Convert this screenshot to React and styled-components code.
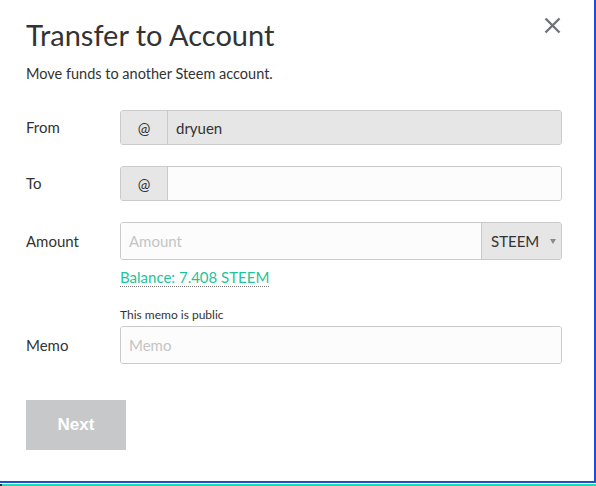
import styled, { createGlobalStyle } from "styled-components";

const GlobalStyle = createGlobalStyle`
  html, body {
    margin: 0;
    padding: 0;
    background: #fff;
  }
  body {
    font-family: "Source Sans Pro", Lato, "Liberation Sans", sans-serif;
    color: #333;
  }
`;

const fields = [
  { key: "from", label: "From", prefix: "@", value: "dryuen", disabled: true },
  { key: "to", label: "To", prefix: "@", value: "" },
];

const App = () => {
  return (
    <>
      <GlobalStyle />
      <Frame>
        <Modal>
          <CloseButton aria-label="Close">
            <svg width="17" height="17" viewBox="0 0 17 17">
              <path
                d="M1.5 1.5L15.5 15.5M15.5 1.5L1.5 15.5"
                stroke="#6e7479"
                strokeWidth="2.4"
              />
            </svg>
          </CloseButton>

          <Title>Transfer to Account</Title>
          <Subtitle>Move funds to another Steem account.</Subtitle>

          <Form>
            {fields.map((f) => (
              <Row key={f.key}>
                <Label>{f.label}</Label>
                <InputGroup>
                  <Addon>{f.prefix}</Addon>
                  <TextInput
                    type="text"
                    defaultValue={f.value}
                    disabled={f.disabled}
                    $disabled={f.disabled}
                  />
                </InputGroup>
              </Row>
            ))}

            <Row $tall>
              <Label $tall>Amount</Label>
              <div>
                <InputGroup $tall>
                  <TextInput type="text" placeholder="Amount" />
                  <Select>
                    STEEM
                    <Caret />
                  </Select>
                </InputGroup>
                <Balance>Balance: 7.408 STEEM</Balance>
              </div>
            </Row>

            <MemoRow>
              <Label $tall>Memo</Label>
              <div>
                <Hint>This memo is public</Hint>
                <InputGroup $tall>
                  <TextInput type="text" placeholder="Memo" />
                </InputGroup>
              </div>
            </MemoRow>
          </Form>

          <NextButton disabled>Next</NextButton>
        </Modal>
        <FocusBar />
      </Frame>
    </>
  );
};

export default App;

const Frame = styled.div`
  width: 596px;
  height: 486px;
  display: flex;
  flex-direction: column;
  overflow: hidden;
`;

const Modal = styled.div`
  position: relative;
  box-sizing: border-box;
  width: 596px;
  height: 483px;
  padding: 17px 32px 0 26px;
  background: #fff;
  border-right: 2px solid #1a4fd6;
  border-bottom: 2px solid #1a4fd6;
`;

const FocusBar = styled.div`
  margin-top: 1px;
  height: 2px;
  background: #1fdcaa;
  border-left: 2px solid #333;
`;

const CloseButton = styled.button`
  position: absolute;
  top: 17px;
  right: 33px;
  width: 17px;
  height: 17px;
  padding: 0;
  border: 0;
  background: none;
  display: flex;
  cursor: pointer;
`;

const Title = styled.h2`
  margin: 0;
  font-size: 29px;
  font-weight: 400;
  line-height: 36px;
  color: #333;
`;

const Subtitle = styled.p`
  margin: 11px 0 0;
  font-size: 14.5px;
  line-height: 20px;
  color: #333;
`;

const Form = styled.div`
  margin-top: 26px;
  display: flex;
  flex-direction: column;
`;

const Row = styled.div`
  display: grid;
  grid-template-columns: 94px 442px;
  align-items: start;
  margin-bottom: ${(p) => (p.$tall ? "20px" : "21px")};
`;

const MemoRow = styled.div`
  display: grid;
  grid-template-columns: 94px 442px;
  align-items: end;
`;

const Label = styled.div`
  font-size: 15px;
  line-height: ${(p) => (p.$tall ? "38px" : "35px")};
  color: #333;
`;

const InputGroup = styled.div`
  box-sizing: border-box;
  display: flex;
  height: ${(p) => (p.$tall ? "38px" : "35px")};
  border: 1px solid #cacaca;
  border-radius: 3px;
  overflow: hidden;
  background: #fcfcfc;
`;

const Addon = styled.div`
  width: 46px;
  flex: none;
  display: flex;
  align-items: center;
  justify-content: center;
  background: #e6e6e6;
  border-right: 1px solid #cacaca;
  font-size: 15px;
  color: #333;
`;

const TextInput = styled.input`
  flex: 1;
  min-width: 0;
  margin: 0;
  border: 0;
  outline: none;
  padding: 0 0 0 8px;
  font-family: inherit;
  font-size: 15px;
  color: #333;
  background: ${(p) => (p.$disabled ? "#e6e6e6" : "#fcfcfc")};

  &::placeholder {
    color: #c4c4c4;
  }
  &:disabled {
    color: #333;
    -webkit-text-fill-color: #333;
    opacity: 1;
  }
`;

const Select = styled.div`
  width: 80px;
  flex: none;
  display: flex;
  align-items: center;
  gap: 11px;
  box-sizing: border-box;
  padding-left: 9px;
  background: #e6e6e6;
  border-left: 1px solid #cacaca;
  font-size: 15px;
  color: #333;
`;

const Caret = styled.span`
  width: 0;
  height: 0;
  border-left: 3.5px solid transparent;
  border-right: 3.5px solid transparent;
  border-top: 5px solid #8a8a8a;
`;

const Balance = styled.span`
  display: inline-block;
  margin-top: 8px;
  font-size: 15px;
  line-height: 18px;
  color: #1fc39a;
  border-bottom: 1px dotted #777;
`;

const Hint = styled.div`
  font-size: 12px;
  line-height: 16px;
  margin-bottom: 3px;
  color: #333;
`;

const NextButton = styled.button`
  margin-top: 36px;
  width: 100px;
  height: 50px;
  border: 0;
  padding: 0;
  background: #c6c8ca;
  color: #fff;
  font-family: "Liberation Sans", Arial, sans-serif;
  font-weight: 700;
  font-size: 17px;
`;
